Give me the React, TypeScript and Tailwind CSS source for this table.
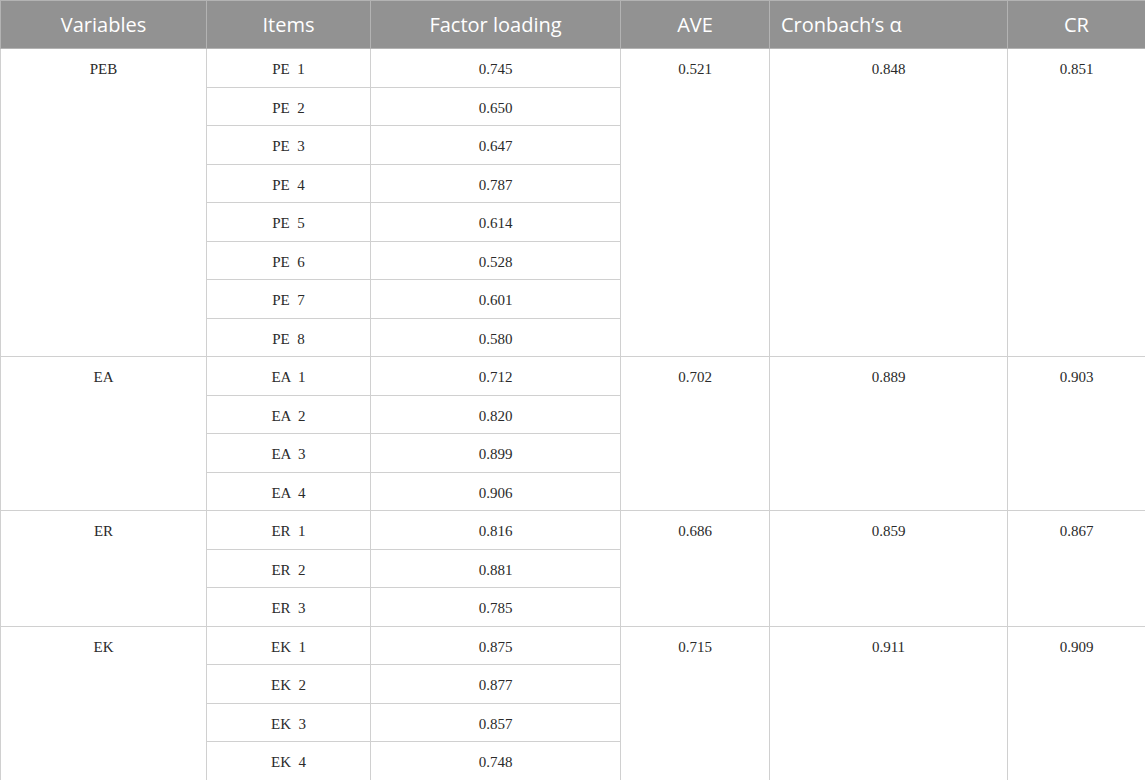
const groups = [
  {
    name: 'PEB',
    ave: '0.521',
    alpha: '0.848',
    cr: '0.851',
    items: [
      ['PE  1', '0.745'],
      ['PE  2', '0.650'],
      ['PE  3', '0.647'],
      ['PE  4', '0.787'],
      ['PE  5', '0.614'],
      ['PE  6', '0.528'],
      ['PE  7', '0.601'],
      ['PE  8', '0.580'],
    ],
  },
  {
    name: 'EA',
    ave: '0.702',
    alpha: '0.889',
    cr: '0.903',
    items: [
      ['EA  1', '0.712'],
      ['EA  2', '0.820'],
      ['EA  3', '0.899'],
      ['EA  4', '0.906'],
    ],
  },
  {
    name: 'ER',
    ave: '0.686',
    alpha: '0.859',
    cr: '0.867',
    items: [
      ['ER  1', '0.816'],
      ['ER  2', '0.881'],
      ['ER  3', '0.785'],
    ],
  },
  {
    name: 'EK',
    ave: '0.715',
    alpha: '0.911',
    cr: '0.909',
    items: [
      ['EK  1', '0.875'],
      ['EK  2', '0.877'],
      ['EK  3', '0.857'],
      ['EK  4', '0.748'],
    ],
  },
];

const head = 'h-[48px] border border-[#b3b3b3] px-2 text-[20px] font-normal text-white';
const cell = 'border border-[#d0d0d0] px-2 align-top pt-[9px] text-center whitespace-pre';

export default function App() {
  return (
    <div className="w-[1145px] bg-white">
      <table
        className="w-[1145px] table-fixed border-collapse text-[15px] text-[#2a2a2a]"
        style={{ fontFamily: '"Liberation Serif", serif' }}
      >
        <colgroup>
          <col className="w-[206px]" />
          <col className="w-[164px]" />
          <col className="w-[250px]" />
          <col className="w-[149px]" />
          <col className="w-[238px]" />
          <col className="w-[138px]" />
        </colgroup>
        <thead>
          <tr className="bg-[#929292]" style={{ fontFamily: '"Open Sans", sans-serif' }}>
            <th className={head + ' text-center'}>Variables</th>
            <th className={head + ' text-center'}>Items</th>
            <th className={head + ' text-center'}>Factor loading</th>
            <th className={head + ' text-center'}>AVE</th>
            <th className={head + ' text-left pl-[11px]'}>Cronbach’s α</th>
            <th className={head + ' text-center'}>CR</th>
          </tr>
        </thead>
        <tbody>
          {groups.map((g) =>
            g.items.map(([item, load], i) => (
              <tr key={item} className="h-[38.5px]">
                {i === 0 && (
                  <td rowSpan={g.items.length} className={cell}>
                    {g.name}
                  </td>
                )}
                <td className={cell}>{item}</td>
                <td className={cell}>{load}</td>
                {i === 0 && (
                  <>
                    <td rowSpan={g.items.length} className={cell}>
                      {g.ave}
                    </td>
                    <td rowSpan={g.items.length} className={cell}>
                      {g.alpha}
                    </td>
                    <td rowSpan={g.items.length} className={cell}>
                      {g.cr}
                    </td>
                  </>
                )}
              </tr>
            ))
          )}
        </tbody>
      </table>
    </div>
  );
}
